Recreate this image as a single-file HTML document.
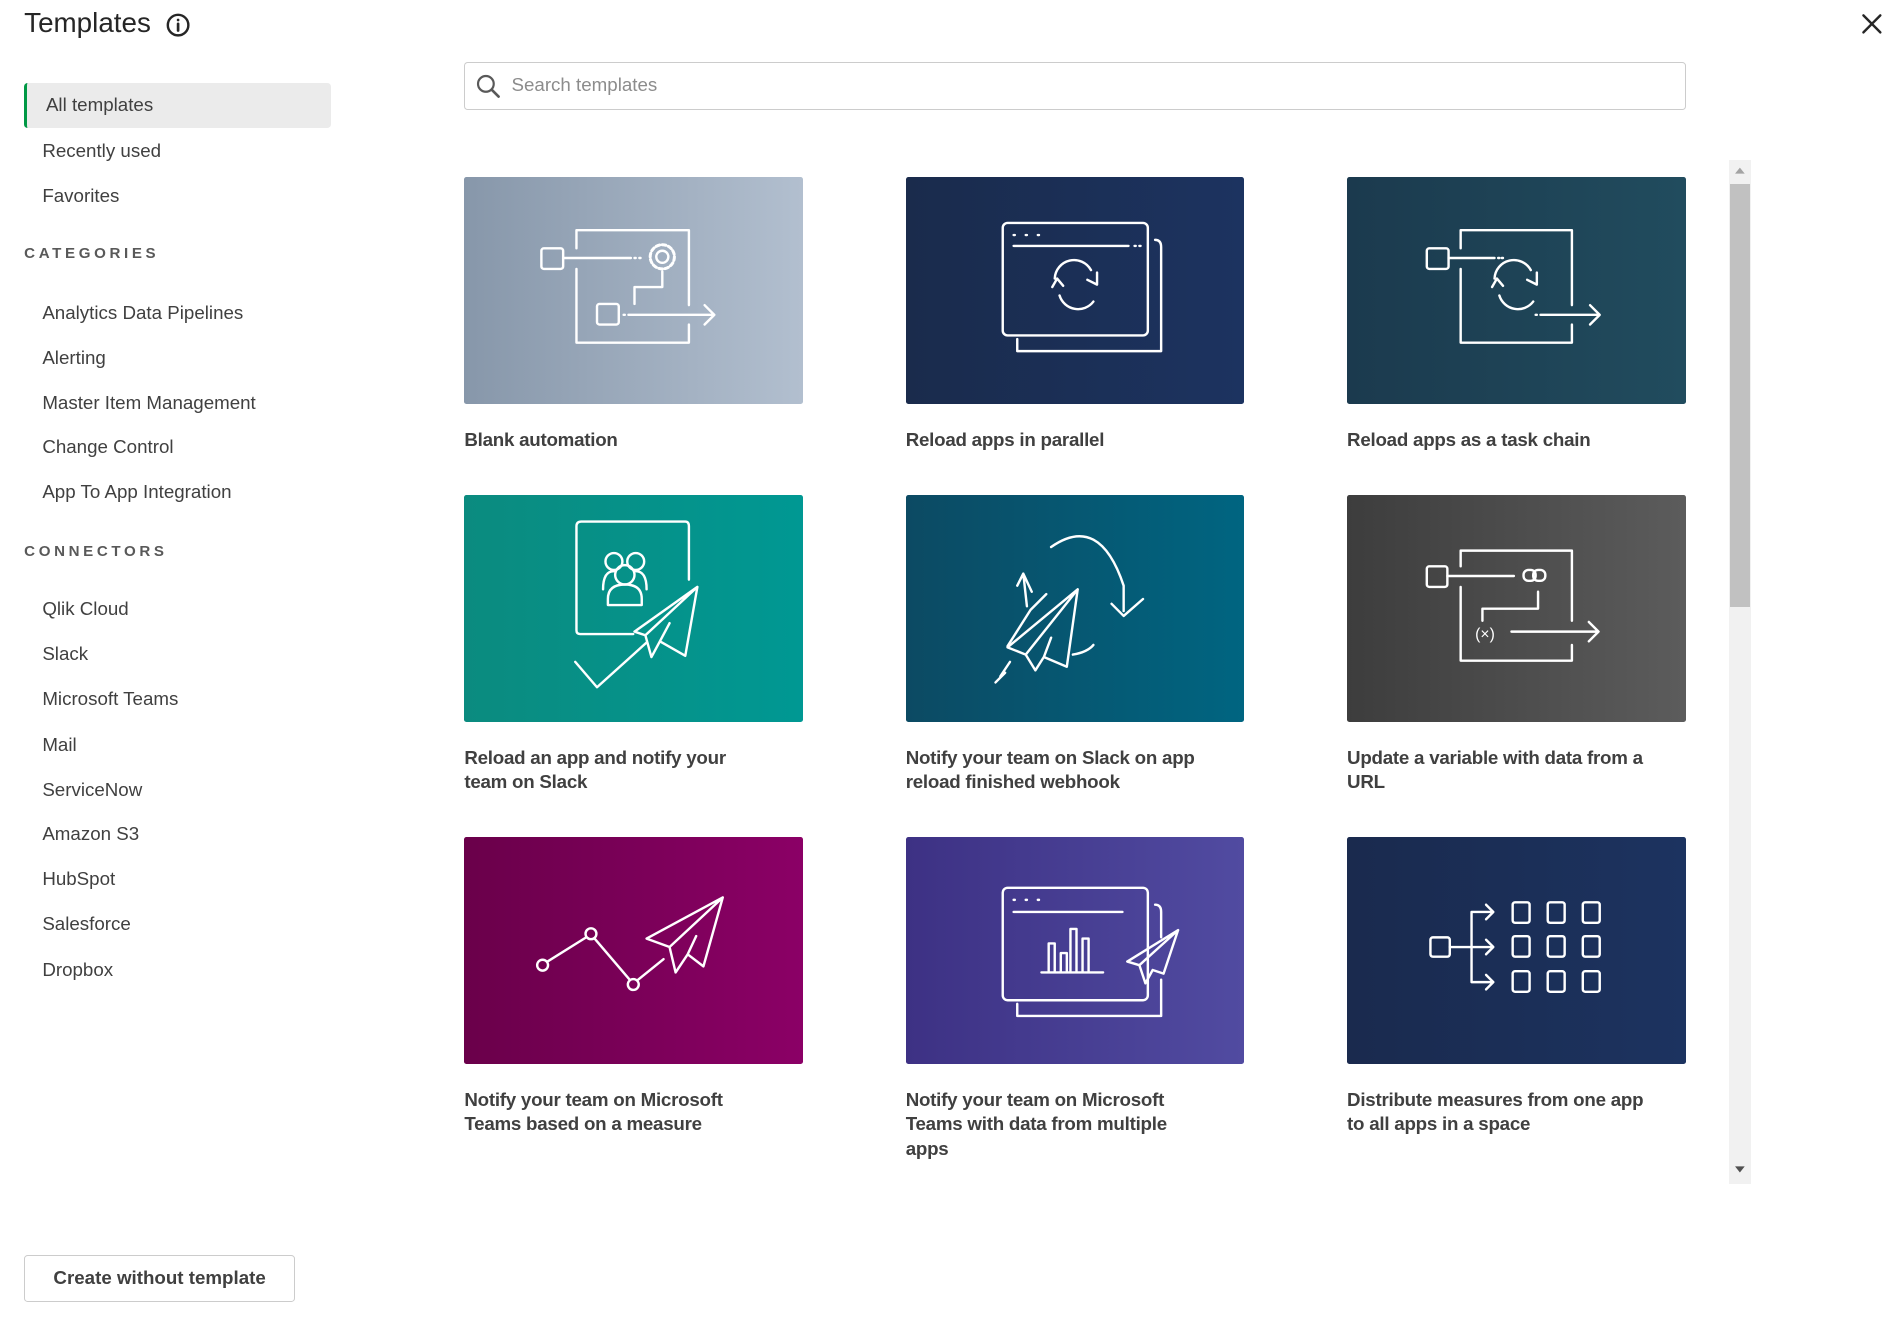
<!DOCTYPE html>
<html><head><meta charset="utf-8">
<style>
html,body{margin:0;padding:0;background:#fff;width:1896px;height:1331px;overflow:hidden}
#w{zoom:1.2092;width:1568px;height:1101px;position:relative;font-family:"Liberation Sans",sans-serif;color:#404040}
.a{position:absolute;white-space:nowrap}
.nav{position:absolute;left:35px;font-size:15.5px;color:#404040;line-height:20px}
.hdr{position:absolute;left:20px;font-size:12.5px;font-weight:bold;letter-spacing:3px;color:#595959}
.card{position:absolute;width:280px;height:188px;border-radius:2px;overflow:hidden}
.card svg{display:block}
.t{position:absolute;width:270px;font-size:15.5px;font-weight:bold;line-height:20px;color:#404040;letter-spacing:-0.2px}
svg *{fill:none;stroke:#fff;stroke-width:2;stroke-linecap:round;stroke-linejoin:round}
</style></head><body><div id="w">
<div class="a" style="left:20px;top:6px;font-size:23px;color:#262626">Templates</div>
<svg class="a" style="left:137px;top:11px" width="20" height="20" viewBox="0 0 20 20"><circle cx="10" cy="10" r="8.5" style="stroke:#262626;stroke-width:2"/><line x1="10" y1="9" x2="10" y2="14.5" style="stroke:#262626;stroke-width:2.2"/><circle cx="10" cy="5.8" r="1.1" style="fill:#262626;stroke:none"/></svg>
<svg class="a" style="left:1539px;top:11px" width="18" height="18" viewBox="0 0 18 18"><path d="M2,2 L16,16 M16,2 L2,16" style="stroke:#262626;stroke-width:2"/></svg>

<div class="a" style="left:20px;top:69px;width:254px;height:37px;background:#ebebeb;border-radius:3px;border-left:3px solid #009845;box-sizing:border-box"></div>
<div class="nav" style="left:38px;top:77px">All templates</div>
<div class="nav" style="top:115px">Recently used</div>
<div class="nav" style="top:152px">Favorites</div>
<div class="hdr" style="top:203px">CATEGORIES</div>
<div class="nav" style="top:249px">Analytics Data Pipelines</div>
<div class="nav" style="top:286px">Alerting</div>
<div class="nav" style="top:323px">Master Item Management</div>
<div class="nav" style="top:360px">Change Control</div>
<div class="nav" style="top:397px">App To App Integration</div>
<div class="hdr" style="top:449px">CONNECTORS</div>
<div class="nav" style="top:494px">Qlik Cloud</div>
<div class="nav" style="top:531px">Slack</div>
<div class="nav" style="top:568px">Microsoft Teams</div>
<div class="nav" style="top:606px">Mail</div>
<div class="nav" style="top:643px">ServiceNow</div>
<div class="nav" style="top:680px">Amazon S3</div>
<div class="nav" style="top:717px">HubSpot</div>
<div class="nav" style="top:754px">Salesforce</div>
<div class="nav" style="top:792px">Dropbox</div>

<div class="a" style="left:20px;top:1038px;width:224px;height:39px;border:1px solid #ccc;border-radius:3px;box-sizing:border-box;font-size:15.5px;font-weight:bold;text-align:center;line-height:37px;color:#404040">Create without template</div>

<div class="a" style="left:384px;top:51px;width:1010px;height:40px;border:1px solid #ccc;border-radius:3px;box-sizing:border-box"></div>
<svg class="a" style="left:393px;top:60px" width="22" height="22" viewBox="0 0 22 22"><circle cx="9" cy="9" r="6.5" style="stroke:#595959;stroke-width:1.8"/><line x1="14" y1="14" x2="19.5" y2="19.5" style="stroke:#595959;stroke-width:2.2"/></svg>
<div class="a" style="left:423px;top:61px;font-size:15.5px;color:#8c8c8c">Search templates</div>

<div class="a" style="left:1430px;top:132px;width:18px;height:847px;background:#f1f1f1"></div>
<div class="a" style="left:1431px;top:152px;width:16px;height:350px;background:#c1c1c1"></div>
<svg class="a" style="left:1430px;top:136px" width="18" height="10"><path d="M5,8 L9,3 L13,8 Z" style="fill:#a3a3a3;stroke:none"/></svg>
<svg class="a" style="left:1430px;top:963px" width="18" height="10"><path d="M5,2 L9,7 L13,2 Z" style="fill:#505050;stroke:none"/></svg>

<!-- Card 1 -->
<div class="card" style="left:384px;top:146px;background:linear-gradient(90deg,#8797aa,#b2bfcf)"><svg width="280" height="188">
<rect x="64" y="59" width="18" height="17" rx="2"/><path d="M82,67 H138 M141,67 h1 M145,67 h1"/><circle cx="164" cy="66" r="5"/><circle cx="164" cy="66" r="10" stroke-dasharray="3 2.2" style="stroke-width:2.5"/>
<path d="M93,59 V44 H186 V106 M186,122 V137 H93 V76"/><path d="M164,78 V91 H141 V105"/><rect x="110" y="105" width="18" height="17" rx="2"/><path d="M132,114 h1 M136,114 H206 M199,106 L207,114 L199,122"/></svg></div>
<div class="t" style="left:384px;top:354px">Blank automation</div>

<!-- Card 2 -->
<div class="card" style="left:749px;top:146px;background:linear-gradient(90deg,#1a2b4c,#1c3360)"><svg width="280" height="188">
<rect x="80" y="38" width="120" height="93" rx="4"/><path d="M89,48 h1 M99,48 h1 M109,48 h1 M89,57 H184 M189,57 h1 M193,57 h1"/><path d="M92,134 V144 H211 V58 Q211,52 206,52"/>
<path d="M127,98 A16,16 0 0 0 155,103 M153,77 A16,16 0 0 0 123,84"/><path d="M121,91 L125,84 L130,90 M158,79 L158,89 L150,85" /></svg></div>
<div class="t" style="left:749px;top:354px">Reload apps in parallel</div>

<!-- Card 3 -->
<div class="card" style="left:1114px;top:146px;background:linear-gradient(90deg,#1b3a4e,#214c5e)"><svg width="280" height="188">
<rect x="66" y="59" width="18" height="17" rx="2"/><path d="M84,67 H122 M125,67 h1 M128,67 h1"/><path d="M94,59 V44 H186 V106 M186,122 V137 H94 V76"/>
<path d="M126,98 A16,16 0 0 0 154,103 M152,77 A16,16 0 0 0 122,84"/><path d="M120,91 L124,84 L129,90 M157,79 L157,89 L149,85"/><path d="M156,114 h1 M160,114 H208 M201,106 L209,114 L201,122"/></svg></div>
<div class="t" style="left:1114px;top:354px">Reload apps as a task chain</div>

<!-- Card 4 -->
<div class="card" style="left:384px;top:409px;background:linear-gradient(90deg,#0b8b7f,#009893)"><svg width="280" height="188">
<path d="M140,115 H96 Q93,115 93,112 V26 Q93,22 97,22 H183 Q186,22 186,26 V70"/>
<circle cx="124" cy="55" r="7"/><circle cx="142" cy="55" r="7"/><path d="M115,78 Q115,63 124,63 M151,78 Q151,63 142,63"/><circle cx="133" cy="66" r="8"/><path d="M119,91 V86 Q119,74 133,74 Q147,74 147,86 V91 Z"/>
<path d="M193,76 L141,113 L150,116 L155,134 L162,121 L183,133 Z M193,76 L150,116 M162,121 L170,106"/>
<path d="M92,138 L110,159 L151,122"/></svg></div>
<div class="t" style="left:384px;top:617px">Reload an app and notify your<br>team on Slack</div>

<!-- Card 5 -->
<div class="card" style="left:749px;top:409px;background:linear-gradient(90deg,#0c4a63,#006581)"><svg width="280" height="188">
<path d="M120,43 Q160,15 180,75 V96 M170,90 L180,100 L196,86"/><path d="M138,132 Q150,130 155,124"/>
<path d="M116,82 L103,95 L84,125 M92,75 L97,65 L104,80 M97,65 L100,92"/>
<path d="M142,78 L84,126 L99,132 L107,145 L114,134 L133,142 Z M142,78 L99,132 M114,134 L120,118"/>
<path d="M86,138 L78,150 M82,147 L74,155"/></svg></div>
<div class="t" style="left:749px;top:617px">Notify your team on Slack on app<br>reload finished webhook</div>

<!-- Card 6 -->
<div class="card" style="left:1114px;top:409px;background:linear-gradient(90deg,#3d3d3d,#5c5c5c)"><svg width="280" height="188">
<rect x="66" y="59" width="17" height="17" rx="2"/><path d="M83,67 H138"/><path d="M94,59 V46 H186 V104 M186,124 V137 H94 V76"/>
<rect x="146" y="62" width="10" height="9" rx="4"/><rect x="154" y="62" width="10" height="9" rx="4"/>
<path d="M158,80 V94 H112 V104"/><text x="106" y="119" style="fill:#fff;stroke:none;font-size:13px;font-family:'Liberation Sans',sans-serif">(×)</text>
<path d="M136,113 H207 M200,105 L208,113 L200,121"/></svg></div>
<div class="t" style="left:1114px;top:617px">Update a variable with data from a<br>URL</div>

<!-- Card 7 -->
<div class="card" style="left:384px;top:692px;background:linear-gradient(90deg,#6a004a,#8b0066)"><svg width="280" height="188">
<circle cx="65" cy="106" r="4.5"/><circle cx="105" cy="80" r="4.5"/><circle cx="140" cy="122" r="4.5"/>
<path d="M69,103 L101,83 M108,84 L137,118 M144,118 L165,101"/>
<path d="M214,50 L151,84 L170,91 L175,112 L185,97 L198,107 Z M214,50 L170,91 M185,97 L192,82"/></svg></div>
<div class="t" style="left:384px;top:900px">Notify your team on Microsoft<br>Teams based on a measure</div>

<!-- Card 8 -->
<div class="card" style="left:749px;top:692px;background:linear-gradient(90deg,#3d3184,#514ba1)"><svg width="280" height="188">
<rect x="80" y="42" width="120" height="93" rx="4"/><path d="M89,52 h1 M99,52 h1 M109,52 h1 M89,62 H179"/>
<path d="M92,138 V148 H211 V118 M211,83 V62 Q211,56 206,56"/>
<path d="M112,112 H163 M118,112 V88 H123 V112 M128,112 V96 H133 V112 M136,112 V76 H141 V112 M146,112 V84 H151 V112"/>
<path d="M225,77 L183,103 L193,106 L198,121 L204,110 L213,113 Z M225,77 L193,106"/></svg></div>
<div class="t" style="left:749px;top:900px">Notify your team on Microsoft<br>Teams with data from multiple<br>apps</div>

<!-- Card 9 -->
<div class="card" style="left:1114px;top:692px;background:linear-gradient(90deg,#1a2a4e,#1c3360)"><svg width="280" height="188">
<rect x="69" y="83" width="16" height="16" rx="2"/><path d="M85,91 H120"/>
<path d="M103,62 V120 M103,62 H121 M103,120 H121 M115,56 L121,62 L115,68 M115,85 L121,91 L115,97 M115,114 L121,120 L115,126"/>
<rect x="137" y="54" width="14" height="17" rx="2"/><rect x="166" y="54" width="14" height="17" rx="2"/><rect x="195" y="54" width="14" height="17" rx="2"/>
<rect x="137" y="82" width="14" height="17" rx="2"/><rect x="166" y="82" width="14" height="17" rx="2"/><rect x="195" y="82" width="14" height="17" rx="2"/>
<rect x="137" y="111" width="14" height="17" rx="2"/><rect x="166" y="111" width="14" height="17" rx="2"/><rect x="195" y="111" width="14" height="17" rx="2"/></svg></div>
<div class="t" style="left:1114px;top:900px">Distribute measures from one app<br>to all apps in a space</div>
</div></body></html>
